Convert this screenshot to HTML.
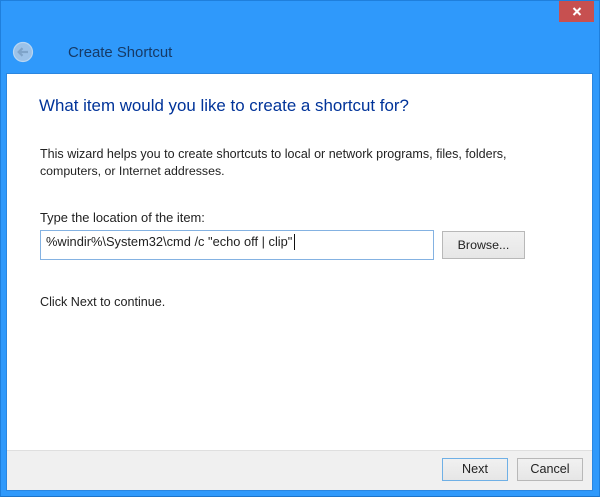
<!DOCTYPE html>
<html><head><meta charset="utf-8"><style>
html,body{margin:0;padding:0}
body{width:600px;height:497px;overflow:hidden;position:relative;background:#2f99fb;font-family:"Liberation Sans",sans-serif;color:#222}
div{position:absolute;box-sizing:border-box}
.t{white-space:nowrap;font-size:12.5px;line-height:16px;filter:blur(.25px)}
.b{text-align:center;font-size:12.4px;background:linear-gradient(#f1f1f1,#e6e6e6);border:1px solid #b8b8b8;color:#222}
</style></head><body>
<div style="left:0;top:0;width:600px;height:497px;border:1px solid #1f7fdc;border-bottom-color:#1d74c9"></div>
<div style="left:6px;top:73px;width:587px;height:418px;border:1px solid #2a86e0"></div>
<div style="left:7px;top:74px;width:585px;height:376px;background:#fff"></div>
<div style="left:7px;top:450px;width:585px;height:40px;background:#f0f0f0;border-top:1px solid #dfdfdf"></div>
<div style="left:559px;top:1px;width:35px;height:21px;background:#c75050"></div>
<svg style="position:absolute;left:571px;top:6px" width="12" height="11" viewBox="0 0 12 11"><path d="M2.5 2L9.5 9M9.5 2L2.5 9" stroke="#fff" stroke-width="2" fill="none"/></svg>
<svg style="position:absolute;left:12px;top:41px" width="22" height="22" viewBox="0 0 22 22"><circle cx="11" cy="11" r="9.5" fill="#9cc2e8" stroke="#b9d6f2" stroke-width="1.2"/><path d="M16 11H7M10.5 7.2L6.7 11L10.5 14.8" stroke="#7fa4c9" stroke-width="2.2" fill="none"/></svg>
<div class="t" style="left:68px;top:44px;font-size:14.9px;line-height:18px;color:#163a66">Create Shortcut</div>
<div class="t" style="left:39px;top:95px;font-size:16.9px;line-height:22px;color:#003399">What item would you like to create a shortcut for?</div>
<div class="t" style="left:40px;top:146px;font-size:12.55px">This wizard helps you to create shortcuts to local or network programs, files, folders,</div>
<div class="t" style="left:40px;top:163px;font-size:12.35px">computers, or Internet addresses.</div>
<div class="t" style="left:40px;top:210px;font-size:12.9px">Type the location of the item:</div>
<div style="left:40px;top:230px;width:394px;height:30px;background:#fff;border:1px solid #84b2e2"></div>
<div class="t" style="left:46px;top:234px;font-size:12.85px">%windir%\System32\cmd /c "echo off | clip"</div>
<div style="left:294px;top:234px;width:1px;height:16px;background:#111"></div>
<div class="t" style="left:40px;top:294px;font-size:12.6px">Click Next to continue.</div>
<div class="b" style="left:442px;top:231px;width:83px;height:28px;line-height:26px">Browse...</div>
<div class="b" style="left:442px;top:458px;width:66px;height:23px;line-height:21px;border-color:#6fb0e6;font-size:12.6px">Next</div>
<div class="b" style="left:517px;top:458px;width:66px;height:23px;line-height:21px;font-size:12.6px">Cancel</div>
</body></html>
